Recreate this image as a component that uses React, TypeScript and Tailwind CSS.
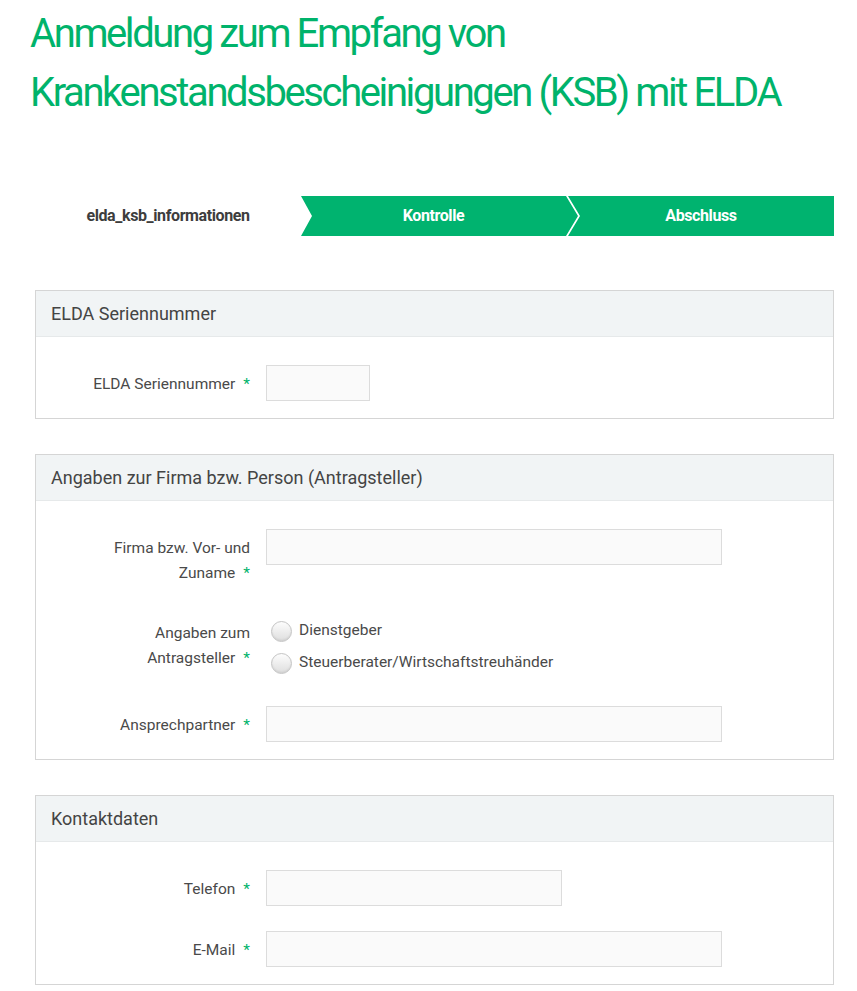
import React from 'react';

const Asterisk: React.FC = () => <span className="ml-2 text-[#00b36b]">*</span>;

const TextInput: React.FC<{ width: string }> = ({ width }) => (
    <input type="text" className={`${width} h-9 bg-[#fafafa] border border-[#dcdcdc] outline-none`} />
);

const Row: React.FC<{ label: string; className?: string; children: React.ReactNode }> = ({ label, className, children }) => (
    <div className={`flex items-start ${className ?? ''}`}>
        <label className="w-[230px] shrink-0 pl-[48px] pr-[16px] pt-[7px] text-right text-[15.5px] leading-[25px] text-[#4a4a4a]">
            {label}
            <Asterisk />
        </label>
        {children}
    </div>
);

const Radio: React.FC<{ label: string }> = ({ label }) => (
    <div className="flex items-center h-8 pl-[5px]">
        <span className="w-[21px] h-[21px] rounded-full border border-[#c4c4c4] bg-gradient-to-b from-[#fdfdfd] to-[#dedede] shadow-[inset_0_-1px_2px_rgba(0,0,0,0.08)]" />
        <span className="ml-[7px] text-[15.5px] text-[#4a4a4a]">{label}</span>
    </div>
);

const Panel: React.FC<{ title: string; children: React.ReactNode }> = ({ title, children }) => (
    <section className="w-[799px] border border-[#d5d5d5]">
        <div className="h-[46px] flex items-center px-[15px] bg-[#f1f4f5] border-b border-[#e6e9ea]">
            <h2 className="text-[18px] text-[#444]">{title}</h2>
        </div>
        <div className="pt-[28px] pb-[17px] flex flex-col">{children}</div>
    </section>
);

const Steps: React.FC = () => (
    <div className="w-[799px] h-10 flex font-bold text-[16px] tracking-[-0.4px]">
        <div className="w-[266px] flex items-center justify-center text-[#3d3d3d]">elda_ksb_informationen</div>
        <div className="w-[277px] pr-[12px] flex items-center justify-center bg-[#00b36f] text-white [clip-path:polygon(0_0,calc(100%-12px)_0,100%_50%,calc(100%-12px)_100%,0_100%,11px_50%)]">
            Kontrolle
        </div>
        <div className="flex-1 -ml-[10px] flex items-center justify-center bg-[#00b36f] text-white [clip-path:polygon(0_0,100%_0,100%_100%,0_100%,12px_50%)]">
            Abschluss
        </div>
    </div>
);

const App: React.FC = () => {
    return (
        <div className="min-h-screen bg-white font-['Roboto',sans-serif] pb-2">
            <h1 className="pl-[30px] pt-[4px] text-[40px] leading-[59px] text-[#00b36b] tracking-[-2.4px]">
                Anmeldung zum Empfang von
                <br />
                Krankenstandsbescheinigungen (KSB) mit ELDA
            </h1>

            <div className="pl-[35px] mt-[74px] flex flex-col">
                <Steps />

                <div className="mt-[54px] flex flex-col gap-[35px]">
                    <Panel title="ELDA Seriennummer">
                        <Row label="ELDA Seriennummer">
                            <TextInput width="w-[104px]" />
                        </Row>
                    </Panel>

                    <Panel title="Angaben zur Firma bzw. Person (Antragsteller)">
                        <Row label="Firma bzw. Vor- und Zuname">
                            <TextInput width="w-[456px]" />
                        </Row>
                        <Row label="Angaben zum Antragsteller" className="mt-[28px]">
                            <div className="pt-[1px] flex flex-col">
                                <Radio label="Dienstgeber" />
                                <Radio label="Steuerberater/Wirtschaftstreuhänder" />
                            </div>
                        </Row>
                        <Row label="Ansprechpartner" className="mt-[27px]">
                            <TextInput width="w-[456px]" />
                        </Row>
                    </Panel>

                    <Panel title="Kontaktdaten">
                        <Row label="Telefon">
                            <TextInput width="w-[296px]" />
                        </Row>
                        <Row label="E-Mail" className="mt-[25px]">
                            <TextInput width="w-[456px]" />
                        </Row>
                    </Panel>
                </div>
            </div>
        </div>
    );
};

export default App;
